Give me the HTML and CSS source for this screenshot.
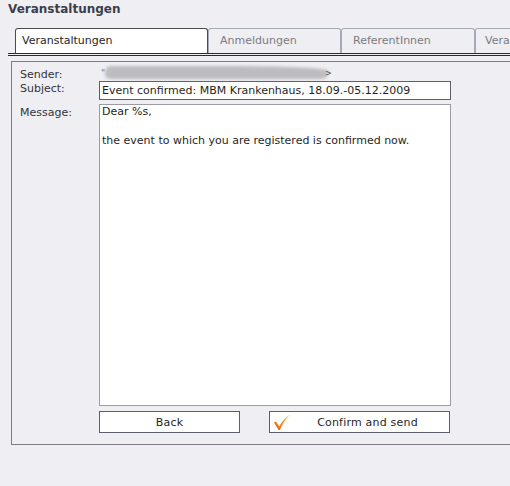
FILE: index.html
```html
<!DOCTYPE html>
<html>
<head>
<meta charset="utf-8">
<link rel="stylesheet" href="styles.css">
</head>
<body>
<div class="page">
  <h1 class="title">Veranstaltungen</h1>
  <div class="tabs">
    <div class="tab active">Veranstaltungen</div>
    <div class="tab t2">Anmeldungen</div>
    <div class="tab t3">ReferentInnen</div>
    <div class="tab t4">Veranstaltungsorte</div>
  </div>
  <div class="panel">
    <div class="form">
      <div class="label">Sender:</div>
      <div class="sender"><span class="quote">"</span><span class="blur"></span><span class="gt">&gt;</span></div>
      <div class="label">Subject:</div>
      <input class="subject" type="text" value="Event confirmed: MBM Krankenhaus, 18.09.-05.12.2009">
      <div class="label msg">Message:</div>
      <textarea class="message">Dear %s,

the event to which you are registered is confirmed now.</textarea>
      <div></div>
      <div class="buttons">
        <button class="btn back">Back</button>
        <button class="btn confirm">
          <svg class="check" width="18" height="17" viewBox="0 0 18 17">
            <defs>
              <linearGradient id="cg" x1="0" y1="1" x2="1" y2="0">
                <stop offset="0" stop-color="#f05a00"/>
                <stop offset="0.6" stop-color="#ff8a1a"/>
                <stop offset="1" stop-color="#ffc060"/>
              </linearGradient>
            </defs>
            <path d="M1 8.5 L3 7.5 L6.2 12.5 C9 7.5 12.5 3.5 17 0.5 C13 4.5 9.5 9.5 6.8 16 L5.6 16 Z" fill="url(#cg)"/>
          </svg>
          <span>Confirm and send</span>
        </button>
      </div>
    </div>
  </div>
</div>
</body>
</html>
```

FILE: styles.css
```css
html, body {
  margin: 0;
  padding: 0;
  background: #efeef3;
  overflow: hidden;
}

.page {
  width: 540px;
  font-family: "DejaVu Sans", Verdana, sans-serif;
  font-size: 11px;
  color: #2b2b33;
}

.title {
  margin: 0;
  padding: 1px 8px 0;
  height: 17px;
  font-size: 12px;
  line-height: 16px;
  font-weight: bold;
  color: #3b3e4b;
}

.tabs {
  display: flex;
  margin: 10px 0 0 8px;
  padding-left: 7px;
  height: 25px;
  border-bottom: 3px double #2a2a2a;
}

.tab {
  box-sizing: border-box;
  height: 25px;
  flex: none;
  border: 1px solid #a6aab6;
  border-bottom: none;
  border-radius: 3px 3px 0 0;
  padding-left: 11px;
  line-height: 24px;
  color: #7b7b82;
  white-space: nowrap;
}

.tab.active {
  width: 193px;
  padding-left: 6px;
  background: #fff;
  border-color: #4a4a4a;
  color: #25252c;
}

.tab.t2 { width: 133px; }
.tab.t3 { width: 134px; }
.tab.t4 { width: 140px; padding-left: 9px; }

.panel {
  margin: 5px 0 0 11px;
  border: 1px solid #7d7d82;
  border-right: none;
  box-shadow: 1px 1px 0 #fff;
  padding: 5px 0 11px 8px;
}

.form {
  display: grid;
  grid-template-columns: 79px 352px;
  align-items: start;
}

.label {
  color: #34343c;
  line-height: 13px;
  padding-top: 1px;
}

.sender {
  height: 14px;
  position: relative;
}

.quote {
  position: absolute;
  left: 2px;
  top: 1px;
  color: #777;
  font-size: 9px;
}

.blur {
  position: absolute;
  left: 6px;
  top: -1px;
  width: 224px;
  height: 13px;
  background: #bdbdc0;
  border-radius: 6px 40% 8px 5px;
  filter: blur(1.6px);
}

.gt {
  position: absolute;
  left: 226px;
  top: 2px;
  font-size: 8px;
  color: #555;
}

.subject {
  box-sizing: border-box;
  width: 352px;
  height: 19px;
  margin: 0;
  border: 1px solid #5f5f66;
  padding: 0 2px;
  background: #fff;
  font-family: "DejaVu Sans", Verdana, sans-serif;
  font-size: 11px;
  color: #1f1f24;
}

.message {
  box-sizing: border-box;
  width: 352px;
  height: 302px;
  margin: 4px 0 0;
  border: 1px solid #9c9ca2;
  padding: 0 2px;
  background: #fff;
  font-family: "DejaVu Sans", Verdana, sans-serif;
  font-size: 11px;
  line-height: 14.5px;
  color: #1f1f24;
  resize: none;
  display: block;
}

.label.msg {
  margin-top: 4px;
  padding-top: 2px;
}

.buttons {
  display: flex;
  gap: 29px;
  margin-top: 5px;
}

.btn {
  box-sizing: border-box;
  height: 22px;
  margin: 0;
  border: 1px solid #5a5e6c;
  background: #fff;
  font-family: "DejaVu Sans", Verdana, sans-serif;
  font-size: 11px;
  color: #1f1f28;
  padding: 0;
  letter-spacing: 0.2px;
}

.btn.back {
  width: 141px;
}

.btn.confirm {
  width: 181px;
  padding-left: 16px;
  position: relative;
}

.check {
  position: absolute;
  left: 3px;
  top: 2px;
}
```
